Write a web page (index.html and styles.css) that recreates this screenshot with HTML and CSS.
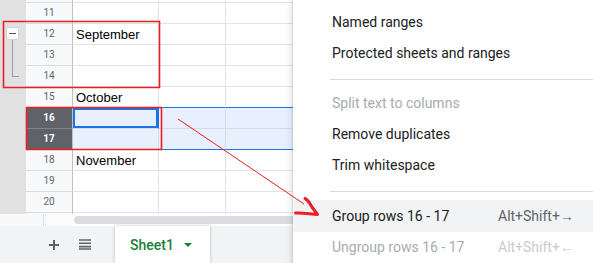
FILE: index.html
```html
<!DOCTYPE html>
<html lang="en">
<head>
    <meta charset="UTF-8">
    <title>Sheets - Data menu</title>
    <link rel="stylesheet" href="styles.css">
</head>
<body>
    <div class="app">
        <div class="grid-area">
            <div class="gutter">
                <div class="group-btn"><span class="minus"></span></div>
                <div class="group-line"></div>
            </div>
            <div class="rows">
                <div class="row sliver-top">
                    <div class="hdr"></div><div class="cell a"></div><div class="cell b"></div><div class="cell c"></div>
                </div>
                <div class="row">
                    <div class="hdr">11</div><div class="cell a"></div><div class="cell b"></div><div class="cell c"></div>
                </div>
                <div class="row">
                    <div class="hdr">12</div><div class="cell a">September</div><div class="cell b"></div><div class="cell c"></div>
                </div>
                <div class="row">
                    <div class="hdr">13</div><div class="cell a"></div><div class="cell b"></div><div class="cell c"></div>
                </div>
                <div class="row">
                    <div class="hdr">14</div><div class="cell a"></div><div class="cell b"></div><div class="cell c"></div>
                </div>
                <div class="row above-sel">
                    <div class="hdr">15</div><div class="cell a">October</div><div class="cell b"></div><div class="cell c"></div>
                </div>
                <div class="row selected">
                    <div class="hdr">16</div><div class="cell a active"></div><div class="cell b"></div><div class="cell c"></div>
                </div>
                <div class="row selected last-sel">
                    <div class="hdr">17</div><div class="cell a"></div><div class="cell b"></div><div class="cell c"></div>
                </div>
                <div class="row">
                    <div class="hdr">18</div><div class="cell a">November</div><div class="cell b"></div><div class="cell c"></div>
                </div>
                <div class="row">
                    <div class="hdr">19</div><div class="cell a"></div><div class="cell b"></div><div class="cell c"></div>
                </div>
                <div class="row">
                    <div class="hdr">20</div><div class="cell a"></div><div class="cell b"></div><div class="cell c"></div>
                </div>
                <div class="row sliver-bottom">
                    <div class="hdr"></div><div class="cell a"></div><div class="cell b"></div><div class="cell c"></div>
                </div>
            </div>
        </div>

        <div class="scroll-row">
            <div class="scroll-left"></div>
            <div class="scroll-gap"></div>
            <div class="scroll-mid"></div>
            <div class="scroll-track"><div class="thumb"></div></div>
        </div>

        <div class="tabbar">
            <div class="tab-btn">
                <svg width="12" height="12" viewBox="0 0 12 12"><path d="M6 1v10M1 6h10" stroke="#5f6368" stroke-width="2"/></svg>
            </div>
            <div class="tab-btn">
                <svg width="12" height="11" viewBox="0 0 12 11"><path d="M0 1h12M0 4.3h12M0 7.6h12M0 10h12" stroke="#5f6368" stroke-width="1.6"/></svg>
            </div>
            <div class="sheet-tab">
                <span class="tab-name">Sheet1</span>
                <span class="tab-caret"></span>
            </div>
        </div>

        <div class="menu">
            <div class="menu-item">Named ranges</div>
            <div class="menu-item">Protected sheets and ranges</div>
            <div class="menu-sep"></div>
            <div class="menu-item disabled">Split text to columns</div>
            <div class="menu-item">Remove duplicates</div>
            <div class="menu-item">Trim whitespace</div>
            <div class="menu-sep"></div>
            <div class="menu-item hover"><span>Group rows 16 - 17</span><span class="shortcut">Alt+Shift+→</span></div>
            <div class="menu-item disabled"><span>Ungroup rows 16 - 17</span><span class="shortcut">Alt+Shift+←</span></div>
        </div>

        <!-- red annotations drawn on top of the screenshot -->
        <svg class="marks" width="593" height="263" viewBox="0 0 593 263">
            <g fill="none" stroke="#ee1c25">
                <path d="M3 21.5H160M3 87.5H160M3.5 21V88M159.5 21V88" stroke-width="1.6"/>
                <path d="M26 107.5H162M26 149.5H162M26.5 107V150M161.5 107V150" stroke-width="1.6"/>
                <line x1="178" y1="119" x2="304" y2="204"/>
                <path d="M305 198.5 C308.5 200 310 204 312 207 L317.5 214.5 C310 213.5 302 212.5 295.5 213" stroke-width="3" stroke-linecap="round" stroke-linejoin="round"/>
            </g>
        </svg>
    </div>
</body>
</html>
```

FILE: styles.css
```css
body, html {
    margin: 0;
    padding: 0;
    background: #fff;
}

.app {
    position: relative;
    width: 593px;
    height: 263px;
    overflow: hidden;
    font-family: Roboto, "Liberation Sans", Arial, sans-serif;
}

/* grid */
.grid-area {
    display: flex;
    height: 214px;
}

.gutter {
    width: 26px;
    flex: none;
    box-sizing: border-box;
    padding: 27px 0 0 6px;
    background: #e1e1e1;
}

.group-btn {
    width: 13px;
    height: 13px;
    box-sizing: border-box;
    border: 1px solid #d4d4d4;
    border-radius: 2px;
    background: #fff;
    display: flex;
    align-items: center;
    justify-content: center;
}

.minus {
    width: 7px;
    height: 1px;
    background: #555;
}

.group-line {
    margin-left: 6px;
    width: 7px;
    height: 37px;
    box-sizing: border-box;
    border-left: 1px solid #9aa0a6;
    border-bottom: 1px solid #9aa0a6;
}

.rows {
    flex: 1;
}

.row {
    display: flex;
    height: 21px;
}

.row > div {
    box-sizing: border-box;
    height: 100%;
    border-bottom: 1px solid #e2e3e3;
}

.hdr {
    width: 47px;
    flex: none;
    background: #f8f9fa;
    border-right: 1px solid #c0c0c0;
    color: #5f6368;
    font-size: 10px;
    line-height: 20px;
    text-align: center;
}

.row > .hdr {
    border-bottom-color: #dcdcdc;
}

.cell {
    border-right: 1px solid #e2e3e3;
    padding: 0 3px;
    font-family: "Liberation Sans", Arial, sans-serif;
    font-size: 13px;
    line-height: 21px;
    color: #000;
    white-space: nowrap;
}

.cell.a { width: 86px; flex: none; }
.cell.b { width: 67px; flex: none; }
.cell.c { flex: 1; border-right: none; }

.row.sliver-top { height: 3px; }
.row.sliver-bottom { height: 1px; }
.row.sliver-bottom > div { border-bottom: none; }

.above-sel > .cell,
.last-sel > .cell {
    border-bottom-color: #1a73e8;
}

.selected > .cell {
    background: #e8f0fe;
    border-right-color: #d5dbe3;
}

.selected > .hdr {
    background: #5f6368;
    color: #fff;
    font-weight: bold;
    border-bottom-color: #80858a;
}

.row.selected:not(.last-sel) > .cell {
    border-bottom-color: #d5dbe3;
}

.selected > .cell.active {
    box-shadow: inset 0 0 0 2px #1a73e8;
    border-right-color: #1a73e8;
    border-bottom-color: #1a73e8;
}

/* horizontal scroll */
.scroll-row {
    display: flex;
    height: 12px;
    background: #f8f9fa;
}

.scroll-left {
    width: 44px;
    box-sizing: border-box;
    border-right: 1px solid #dadce0;
}

.scroll-gap {
    width: 2px;
    box-sizing: border-box;
    border-right: 1px solid #e8eaed;
    background: #fff;
}

.scroll-mid {
    width: 27px;
    background: #fbfbfb;
}

.scroll-track {
    flex: 1;
    background: #fff;
    padding: 2px 0 2px 1px;
    box-sizing: border-box;
}

.thumb {
    height: 8px;
    border-radius: 4px;
    background: #dadce0;
}

/* sheet tabs */
.tabbar {
    display: flex;
    align-items: stretch;
    height: 37px;
    padding-left: 42px;
    gap: 7px;
    background: #f1f3f4;
}

.tab-btn {
    width: 24px;
    display: flex;
    align-items: center;
    justify-content: center;
}

.sheet-tab {
    display: flex;
    align-items: center;
    margin-left: 11px;
    width: 95px;
    box-sizing: border-box;
    padding-left: 15px;
    background: #fff;
    box-shadow: 0 0 3px rgba(60, 64, 67, 0.3);
}

.tab-name {
    color: #188038;
    font-size: 14px;
    font-weight: 500;
}

.tab-caret {
    margin-left: 10px;
    width: 0;
    height: 0;
    border-left: 4px solid transparent;
    border-right: 4px solid transparent;
    border-top: 4px solid #188038;
}

/* data menu */
.menu {
    position: absolute;
    top: 0;
    left: 293px;
    width: 300px;
    height: 263px;
    padding-top: 7px;
    box-sizing: border-box;
    background: #fff;
    box-shadow: 0 2px 6px 2px rgba(60, 64, 67, 0.15), 0 1px 2px rgba(60, 64, 67, 0.3);
    z-index: 2;
}

.menu-item {
    display: grid;
    grid-template-columns: 166px auto;
    height: 31px;
    line-height: 31px;
    padding-left: 39px;
    font-size: 14px;
    color: #202124;
    white-space: nowrap;
}

.menu-item.hover {
    height: 32px;
    line-height: 32px;
    background: #f1f3f4;
}

.menu-item.disabled {
    color: #a8abaf;
}

.shortcut {
    color: #5f6368;
}

.menu-item.disabled .shortcut {
    color: #c8cacd;
}

.menu-sep {
    margin: 10px 0 8px 37px;
    border-top: 1px solid #dadce0;
}

.marks {
    position: absolute;
    top: 0;
    left: 0;
    z-index: 3;
    pointer-events: none;
}
```
